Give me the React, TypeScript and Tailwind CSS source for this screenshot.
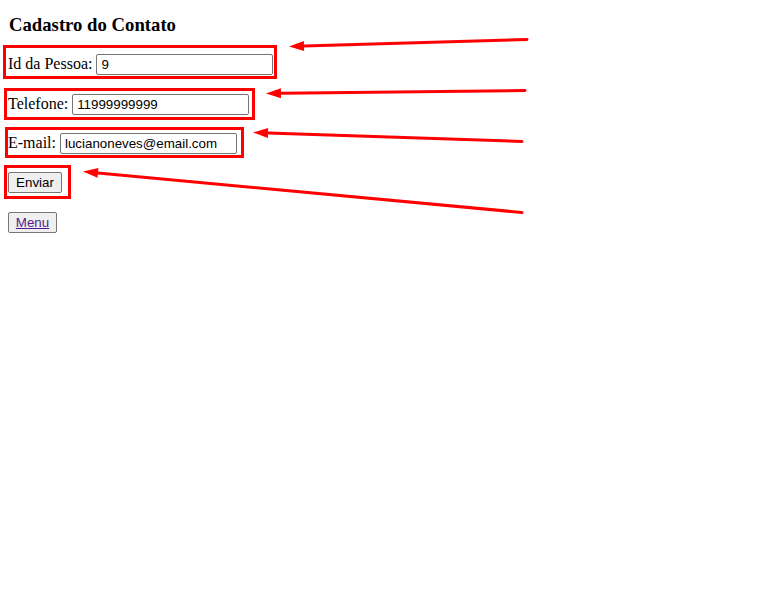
import React from "react";

// red annotation arrows: tail -> tip
const arrows = [
  { x1: 527, y1: 39.5, x2: 289, y2: 46.5 },
  { x1: 525, y1: 90.5, x2: 266, y2: 93.5 },
  { x1: 522, y1: 141.5, x2: 253, y2: 132.5 },
  { x1: 522, y1: 212.5, x2: 83, y2: 171.5 },
];

function Arrow({ x1, y1, x2, y2 }: { x1: number; y1: number; x2: number; y2: number }) {
  const dx = x1 - x2;
  const dy = y1 - y2;
  const len = Math.hypot(dx, dy);
  const ux = dx / len;
  const uy = dy / len;
  const bx = x2 + ux * 15;
  const by = y2 + uy * 15;
  const px = -uy * 5;
  const py = ux * 5;
  const pts = `${x2},${y2} ${bx + px},${by + py} ${bx - px},${by - py}`;
  return (
    <g>
      <line x1={x1} y1={y1} x2={bx} y2={by} stroke="#ff0000" strokeWidth={3} strokeLinecap="round" />
      <polygon points={pts} fill="#ff0000" />
    </g>
  );
}

const inputCls =
  "w-[177px] h-[21px] border border-[#767676] rounded-[2px] pl-[4px] pr-[2px] text-[13.33px] font-['Liberation_Sans',Arial,sans-serif] text-black bg-white outline-none";
const labelCls = "text-[16px] leading-[18px] font-['Liberation_Serif','Times_New_Roman',serif] text-black";
const buttonCls =
  "h-[21px] border border-[#767676] rounded-[2px] bg-[#efefef] text-[13.33px] font-['Liberation_Sans',Arial,sans-serif] text-black flex items-center justify-center";

export default function App() {
  return (
    <div className="relative w-[759px] h-[601px] bg-white overflow-hidden">
      <h3 className="ml-[9px] pt-[14px] text-[18.72px] leading-[22px] font-bold font-['Liberation_Serif','Times_New_Roman',serif] text-black">
        Cadastro do Contato
      </h3>

      <div className="mt-[9px] ml-[3px] w-[274px] h-[34px] border-[3px] border-[#ff0000] flex items-baseline gap-[4px] pl-[2px] pt-[6px]">
        <label className={labelCls}>Id da Pessoa:</label>
        <input className={inputCls} defaultValue="9" />
      </div>

      <div className="mt-[9px] ml-[4px] w-[251px] h-[32px] border-[3px] border-[#ff0000] flex items-baseline gap-[4px] pl-[1px] pt-[3px]">
        <label className={labelCls}>Telefone:</label>
        <input className={inputCls} defaultValue="11999999999" />
      </div>

      <div className="mt-[7px] ml-[5px] w-[239px] h-[31px] border-[3px] border-[#ff0000] flex items-baseline gap-[4px] pl-0 pt-[3px]">
        <label className={labelCls}>E-mail:</label>
        <input className={inputCls} defaultValue="lucianoneves@email.com" />
      </div>

      <div className="mt-[7px] ml-[4px] w-[67px] h-[34px] border-[3px] border-[#ff0000] pl-[1px] pt-[4px]">
        <button className={`${buttonCls} w-[54px]`}>Enviar</button>
      </div>

      <button className={`${buttonCls} w-[49px] mt-[13px] ml-[8px]`}>
        <span className="underline text-[#551a8b]">Menu</span>
      </button>

      {/* annotation arrows drawn over the page */}
      <svg className="absolute left-0 top-0 pointer-events-none" width={759} height={601}>
        {arrows.map((a, i) => (
          <Arrow key={i} {...a} />
        ))}
      </svg>
    </div>
  );
}
